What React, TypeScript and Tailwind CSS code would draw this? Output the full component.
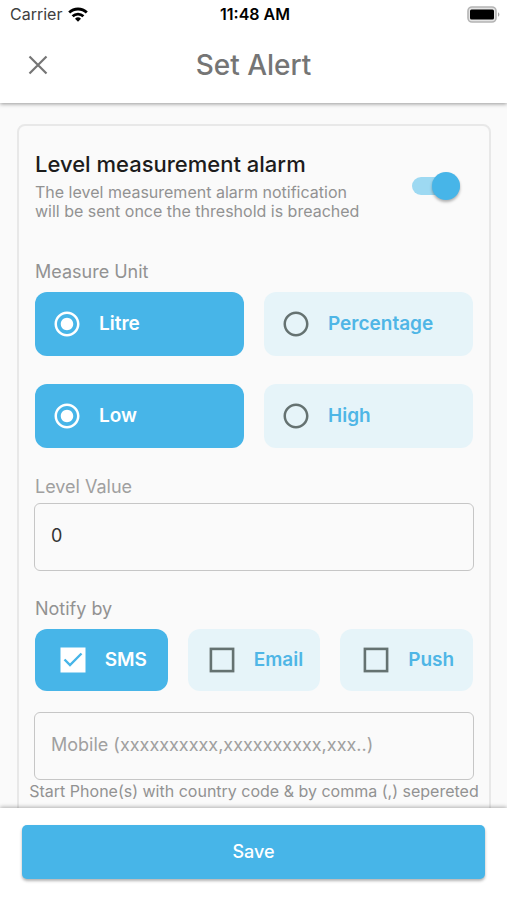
import { useState } from "react"
import { MdRadioButtonChecked, MdRadioButtonUnchecked } from "react-icons/md";

type TileProps = {
    label: string;
    checked: boolean;
    onChange: () => void;
};

type RadioTileProps = TileProps & {
    name: string;
};

function StatusBar() {
    return (
        <div className="grid grid-cols-3 items-center h-7 pl-[10px] pr-[7px] text-base text-black">
            <div className="flex items-center gap-x-[6px] text-neutral-700">
                Carrier
                <svg width="20" height="15" viewBox="0 0 20 15" fill="none" stroke="#000" strokeWidth="2.8">
                    <path d="M1.2 5.6a12.6 12.6 0 0 1 17.6 0" />
                    <path d="M4.6 9.2a7.8 7.8 0 0 1 10.8 0" />
                    <path d="M10 14.8 7 11.8a4.3 4.3 0 0 1 6 0z" fill="#000" stroke="none" />
                </svg>
            </div>
            <div className="text-center font-semibold">11:48 AM</div>
            <svg className="justify-self-end" width="33" height="17" viewBox="0 0 33 17">
                <rect x="1" y="1" width="28" height="15" rx="4" fill="#e4e4e4" stroke="#b4b4b4" strokeWidth="1.6" />
                <rect x="3" y="3.5" width="24" height="10" rx="1.5" fill="#000" />
                <path d="M31 6.3c1.9.8 1.9 3.6 0 4.4z" fill="#a8a8a8" />
            </svg>
        </div>
    )
}

function RadioTile({ label, name, checked, onChange }: RadioTileProps) {
    return (
        <label className={`flex items-center gap-x-[17px] h-16 px-[17px] rounded-xl text-[19px] font-semibold cursor-pointer ${checked ? 'bg-[#47b5e8] text-white' : 'bg-[#e6f4f9] text-[#4fb6e6]'}`}>
            <input type="radio" name={name} className="sr-only" checked={checked} onChange={onChange} />
            {checked
                ? <MdRadioButtonChecked className="size-[30px]" />
                : <MdRadioButtonUnchecked className="size-[30px] text-[#657271]" />}
            {label}
        </label>
    )
}

function CheckTile({ label, checked, onChange }: TileProps) {
    return (
        <label className={`flex items-center justify-center gap-x-[17px] h-[62px] pl-[2px] rounded-xl text-[19px] font-semibold cursor-pointer ${checked ? 'bg-[#47b5e8] text-white' : 'bg-[#e6f4f9] text-[#4fb6e6]'}`}>
            <input type="checkbox" className="sr-only" checked={checked} onChange={onChange} />
            {checked
                ? <svg className="size-[30px]" viewBox="0 0 30 30" fill="none">
                    <rect x="2.5" y="2.5" width="25" height="25" fill="#fff" />
                    <path d="m6.5 14.5 5.5 5.5L23.5 8.5" stroke="#47b5e8" strokeWidth="2.4" />
                </svg>
                : <svg className="size-[30px]" viewBox="0 0 30 30" fill="none">
                    <rect x="3.9" y="3.9" width="22.2" height="22.2" stroke="#657271" strokeWidth="2.6" />
                </svg>}
            {label}
        </label>
    )
}

export default function App() {
    const [enabled, setEnabled] = useState(true)
    const [unit, setUnit] = useState('Litre')
    const [level, setLevel] = useState('Low')
    const [value, setValue] = useState('0')
    const [mobile, setMobile] = useState('')
    const [notify, setNotify] = useState<string[]>(['SMS'])

    const toggleNotify = (item: string) => {
        setNotify(notify.includes(item) ? notify.filter((n) => n !== item) : [...notify, item])
    }

    return (
        <div className="flex flex-col h-screen bg-[#fafafa] font-[Inter,sans-serif]">
            <header className="relative shrink-0 pb-px bg-white shadow-[0_1px_4px_rgba(0,0,0,0.4)]">
                <StatusBar />
                <div className="grid grid-cols-[44px_1fr_44px] items-center h-[74px] px-4">
                    <button aria-label="Close" className="flex items-center justify-center size-11">
                        <svg className="size-5" viewBox="0 0 20 20" stroke="#757575" strokeWidth="2.2">
                            <path d="m1.5 1.5 17 17M18.5 1.5l-17 17" />
                        </svg>
                    </button>
                    <h1 className="text-center text-[28px] font-medium text-[#757575]">Set Alert</h1>
                </div>
            </header>

            <main className="flex-1 min-h-0 overflow-y-auto [scrollbar-width:none] pl-[17px] pr-4 py-[21px]">
                <section className="border-2 border-[#e8e8e8] rounded-lg px-[15px] pt-6 pb-8">
                    {/* alarm switch */}
                    <div className="flex items-center justify-between">
                        <div className="px-px">
                            <h2 className="mb-[5px] text-[22px] leading-7 font-medium text-[#1c1c1c]">Level measurement alarm</h2>
                            <p className="max-w-[336px] text-base leading-[19px] text-[#929292]">
                                The level measurement alarm notification will be sent once the threshold is breached
                            </p>
                        </div>
                        <input type="checkbox" role="switch" aria-label="Level measurement alarm"
                            className="relative appearance-none shrink-0 w-12 h-[18px] mr-[14px] rounded-full bg-neutral-300 checked:bg-[#9dd9f2] cursor-pointer
                                after:absolute after:-top-[5px] after:left-0 after:size-7 after:rounded-full after:bg-white
                                after:shadow-[0_2px_3px_rgba(0,0,0,0.3)] checked:after:left-5 checked:after:bg-[#47b5e8]"
                            checked={enabled} onChange={() => setEnabled(!enabled)} />
                    </div>

                    {/* measure unit */}
                    <h3 className="mt-[39px] mb-2 px-px text-lg leading-6 text-[#929292]">Measure Unit</h3>
                    <div className="grid grid-cols-2 gap-x-5 gap-y-7 px-px">
                        {
                            ['Litre', 'Percentage'].map((item) => (
                                <RadioTile key={item} name="unit" label={item} checked={unit === item} onChange={() => setUnit(item)} />
                            ))
                        }
                        {
                            ['Low', 'High'].map((item) => (
                                <RadioTile key={item} name="level" label={item} checked={level === item} onChange={() => setLevel(item)} />
                            ))
                        }
                    </div>

                    {/* level value */}
                    <label htmlFor="level-value" className="block mt-[27px] mb-1 px-px text-lg leading-6 text-[#a0a0a0]">Level Value</label>
                    <input id="level-value" type="text" className="block w-full h-[68px] px-4 pb-1 border border-[#c6c6c6] rounded-md text-lg text-[#333333]"
                        value={value} onChange={(e) => setValue(e.target.value)} />

                    {/* notify by */}
                    <h3 className="mt-[26px] mb-2 px-px text-lg leading-6 text-[#929292]">Notify by</h3>
                    <div className="grid grid-cols-3 gap-x-5 px-px">
                        {
                            ['SMS', 'Email', 'Push'].map((item) => (
                                <CheckTile key={item} label={item} checked={notify.includes(item)} onChange={() => toggleNotify(item)} />
                            ))
                        }
                    </div>
                    <input id="mobile" type="text" aria-describedby="mobile-hint" aria-label="Mobile"
                        className="block w-full h-[68px] mt-[21px] px-4 pb-1 border border-[#c6c6c6] rounded-md text-lg text-[#333333] placeholder:text-[#a0a0a0]"
                        placeholder="Mobile (xxxxxxxxxx,xxxxxxxxxx,xxx..)"
                        value={mobile} onChange={(e) => setMobile(e.target.value)} />
                    <p id="mobile-hint" className="-mx-2 text-base leading-[22px] text-center whitespace-nowrap text-[#929292]">
                        Start Phone(s) with country code &amp; by comma (,) sepereted
                    </p>
                </section>
            </main>

            <footer className="relative shrink-0 px-[22px] pt-[17px] pb-[21px] bg-white shadow-[0_-1px_4px_rgba(0,0,0,0.3)]">
                <button className="w-full h-[54px] rounded-[5px] bg-[#47b5e8] text-lg font-medium text-white shadow-[0_2px_3px_rgba(0,0,0,0.3)]">
                    Save
                </button>
            </footer>
        </div>
    )
}
